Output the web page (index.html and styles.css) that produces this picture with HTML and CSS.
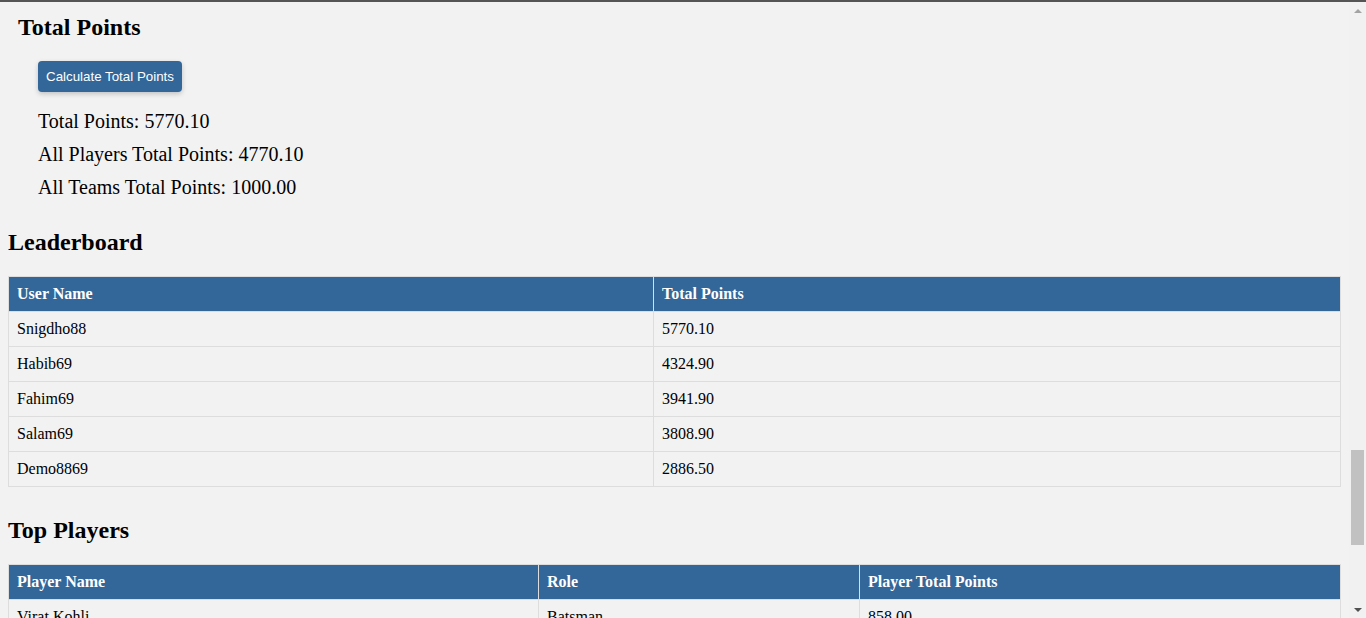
FILE: index.html
```html
<!DOCTYPE html>
<html lang="en">
<head>
<meta charset="utf-8">
<title>Fantasy League - Points</title>
<link rel="stylesheet" href="styles.css">
</head>
<body>
<div class="frame">
  <main class="page">
    <section class="total-section">
      <h2 class="section-title">Total Points</h2>
      <div class="total-body">
        <button class="calc-btn" type="button">Calculate Total Points</button>
        <p class="total-line">Total Points: 5770.10</p>
        <p class="total-line">All Players Total Points: 4770.10</p>
        <p class="total-line">All Teams Total Points: 1000.00</p>
      </div>
    </section>

    <section class="board-section">
      <h2 class="section-title">Leaderboard</h2>
      <table class="data-table">
        <colgroup>
          <col class="col-user">
          <col>
        </colgroup>
        <thead>
          <tr><th>User Name</th><th>Total Points</th></tr>
        </thead>
        <tbody>
          <tr><td>Snigdho88</td><td>5770.10</td></tr>
          <tr><td>Habib69</td><td>4324.90</td></tr>
          <tr><td>Fahim69</td><td>3941.90</td></tr>
          <tr><td>Salam69</td><td>3808.90</td></tr>
          <tr><td>Demo8869</td><td>2886.50</td></tr>
        </tbody>
      </table>
    </section>

    <section class="board-section">
      <h2 class="section-title">Top Players</h2>
      <table class="data-table">
        <colgroup>
          <col class="col-player">
          <col class="col-role">
          <col>
        </colgroup>
        <thead>
          <tr><th>Player Name</th><th>Role</th><th>Player Total Points</th></tr>
        </thead>
        <tbody>
          <tr><td>Virat Kohli</td><td>Batsman</td><td>858.00</td></tr>
          <tr><td>Shakib Al Hasan</td><td>All-rounder</td><td>742.50</td></tr>
          <tr><td>Jasprit Bumrah</td><td>Bowler</td><td>690.00</td></tr>
        </tbody>
      </table>
    </section>
  </main>

  <div class="scrollbar" aria-hidden="true">
    <div class="sb-btn"><span class="sb-arrow-up"></span></div>
    <div class="sb-track"><div class="sb-thumb"></div></div>
    <div class="sb-btn"><span class="sb-arrow-down"></span></div>
  </div>
</div>
</body>
</html>
```

FILE: styles.css
```css
html, body {
  margin: 0;
  padding: 0;
  height: 100%;
  overflow: hidden;
}

body {
  background: #f2f2f2;
  font-family: "Liberation Serif", "Times New Roman", serif;
  color: #000;
  border-top: 2px solid #555555;
  box-sizing: border-box;
}

.frame {
  display: flex;
  height: 100%;
}

.page {
  flex: 1;
  min-width: 0;
  padding: 0 8px;
  overflow: hidden;
}

.section-title {
  font-size: 24px;
  font-weight: bold;
  margin: 20px 0 20px;
  line-height: normal;
}

.total-section {
  padding-left: 10px;
  margin-bottom: 30px;
}

.total-section .section-title {
  margin-top: 12px;
}

.total-body {
  padding-left: 20px;
}

.calc-btn {
  display: block;
  background: #336699;
  color: #fff;
  border: none;
  border-radius: 4px;
  padding: 8px 8px;
  font-family: "Liberation Sans", Arial, sans-serif;
  font-size: 13.333px;
  line-height: 15px;
  box-shadow: 0 2px 5px rgba(0, 0, 0, 0.2);
  cursor: pointer;
  margin-bottom: 18px;
}

.total-line {
  font-size: 20px;
  line-height: 23px;
  margin: 10px 0;
}

.board-section + .board-section {
  margin-top: 30px;
}

.data-table {
  width: 100%;
  border-collapse: collapse;
  border: 1px solid #dddddd;
  font-size: 16px;
  table-layout: fixed;
}

.col-user { width: 645px; }
.col-player { width: 530px; }
.col-role { width: 321px; }

.data-table th,
.data-table td {
  border: 1px solid #dddddd;
  padding: 8px;
  text-align: left;
  line-height: 18px;
}

.data-table th {
  background: #336699;
  color: #fff;
  font-weight: bold;
}

.scrollbar {
  width: 17px;
  flex: 0 0 17px;
  background: #f1f1f1;
  display: flex;
  flex-direction: column;
}

.sb-btn {
  height: 17px;
  display: flex;
  align-items: center;
  justify-content: center;
}

.sb-arrow-up,
.sb-arrow-down {
  width: 0;
  height: 0;
  border-left: 4px solid transparent;
  border-right: 4px solid transparent;
}

.sb-arrow-up {
  border-bottom: 4px solid #a3a3a3;
}

.sb-arrow-down {
  border-top: 4px solid #505050;
}

.sb-track {
  flex: 1;
  padding-top: 431px;
}

.sb-thumb {
  margin: 0 2px;
  height: 95px;
  background: #c1c1c1;
}
```
